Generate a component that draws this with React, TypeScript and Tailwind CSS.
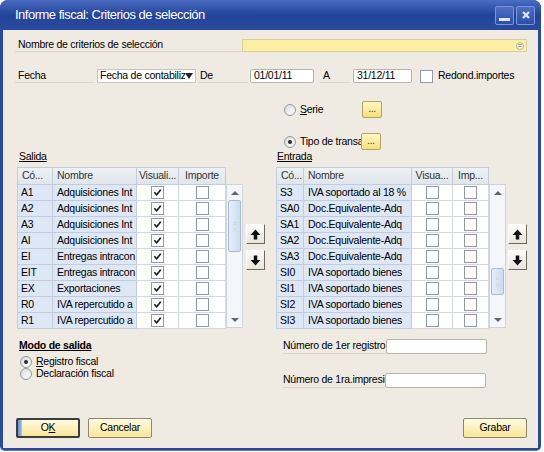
import React from "react";

type Row = { code: string; name: string; vis: boolean; imp: boolean };

const salida: Row[] = [
    { code: "A1", name: "Adquisiciones Int", vis: true, imp: false },
    { code: "A2", name: "Adquisiciones Int", vis: true, imp: false },
    { code: "A3", name: "Adquisiciones Int", vis: true, imp: false },
    { code: "AI", name: "Adquisiciones Int", vis: true, imp: false },
    { code: "EI", name: "Entregas intracon", vis: true, imp: false },
    { code: "EIT", name: "Entregas intracon", vis: true, imp: false },
    { code: "EX", name: "Exportaciones", vis: true, imp: false },
    { code: "R0", name: "IVA repercutido a", vis: true, imp: false },
    { code: "R1", name: "IVA repercutido a", vis: true, imp: false },
];

const entrada: Row[] = [
    { code: "S3", name: "IVA soportado al 18 %", vis: false, imp: false },
    { code: "SA0", name: "Doc.Equivalente-Adq", vis: false, imp: false },
    { code: "SA1", name: "Doc.Equivalente-Adq", vis: false, imp: false },
    { code: "SA2", name: "Doc.Equivalente-Adq", vis: false, imp: false },
    { code: "SA3", name: "Doc.Equivalente-Adq", vis: false, imp: false },
    { code: "SI0", name: "IVA soportado bienes", vis: false, imp: false },
    { code: "SI1", name: "IVA soportado bienes", vis: false, imp: false },
    { code: "SI2", name: "IVA soportado bienes", vis: false, imp: false },
    { code: "SI3", name: "IVA soportado bienes", vis: false, imp: false },
];

function Check({ checked }: { checked?: boolean }) {
    return (
        <span className="flex h-[13px] w-[13px] items-center justify-center border border-[#8e99ab] bg-white">
            {checked && (
                <svg viewBox="0 0 10 10" className="h-[9px] w-[9px]">
                    <path d="M1.5 4.8 L4 7.5 L8.6 2" stroke="#111" strokeWidth="1.7" fill="none" />
                </svg>
            )}
        </span>
    );
}

function Radio({ checked }: { checked?: boolean }) {
    return (
        <span className="flex h-[12px] w-[12px] shrink-0 items-center justify-center rounded-full border border-[#8f97a4] bg-gradient-to-br from-[#dcdcdc] to-white">
            {checked && <span className="h-[4px] w-[4px] rounded-full bg-[#2b2b2b]" />}
        </span>
    );
}

function Dots() {
    return (
        <button className="flex h-[17px] w-[20px] shrink-0 items-center justify-center rounded-[2px] border border-[#b3a462] bg-gradient-to-b from-[#fff6c4] to-[#f7df78] pb-[2px] text-[10px] leading-[10px] text-[#333]">
            ...
        </button>
    );
}

function Arrow({ up }: { up?: boolean }) {
    return (
        <button className="flex h-[20px] w-[19px] items-center justify-center border border-t-white border-l-white border-r-[#6f6a60] border-b-[#6f6a60] bg-gradient-to-b from-[#fdfcfa] to-[#e9e5dc]">
            <svg viewBox="0 0 10 10" className={"h-[11px] w-[11px] " + (up ? "" : "rotate-180")}>
                <path d="M5 0.5 L9.5 5.5 H6.6 V9.5 H3.4 V5.5 H0.5 Z" fill="#111" />
            </svg>
        </button>
    );
}

function ScrollBar({ gap, thumb }: { gap: number; thumb: number }) {
    return (
        <div className="mt-[17px] flex h-[144px] w-[17px] flex-col border border-[#cdd4de] bg-[#f4f6f9] px-[1px]">
            <div className="flex h-[15px] items-center justify-center">
                <span className="h-0 w-0 border-x-[4px] border-b-[4px] border-x-transparent border-b-[#5d6877]" />
            </div>
            <div style={{ height: gap }} />
            <div
                className="flex flex-col items-center justify-center gap-[1px] rounded-[2px] border border-[#a9bbd4] bg-gradient-to-r from-[#e6eef9] to-[#cddcf0]"
                style={{ height: thumb }}
            >
                <span className="text-[6px] leading-[5px] text-[#9aa9bf]">::</span>
                <span className="text-[6px] leading-[5px] text-[#9aa9bf]">::</span>
            </div>
            <div className="flex-1" />
            <div className="flex h-[15px] items-center justify-center">
                <span className="h-0 w-0 border-x-[4px] border-t-[4px] border-x-transparent border-t-[#5d6877]" />
            </div>
        </div>
    );
}

function Grid({
    rows,
    widths,
    heads,
}: {
    rows: Row[];
    widths: [number, number, number, number];
    heads: [string, string, string, string];
}) {
    const [w1, w2, w3, w4] = widths;
    return (
        <div className="flex flex-col border-l border-t border-[#c3ccd8]">
            <div className="flex h-[17px] bg-gradient-to-b from-[#eef1f5] to-[#dfe5ec] text-[#333]">
                {heads.map((h, i) => (
                    <div
                        key={h}
                        className={
                            "flex items-center overflow-hidden whitespace-nowrap border-b border-r border-[#c3ccd8] " +
                            (i < 2 ? "pl-[4px]" : "justify-center")
                        }
                        style={{ width: widths[i] }}
                    >
                        {h}
                    </div>
                ))}
            </div>
            {rows.map((r) => (
                <div key={r.code} className="flex h-[16px]">
                    <div
                        className="flex items-center overflow-hidden whitespace-nowrap border-b border-r border-[#c3ccd8] bg-[#dde7f5] pl-[3px]"
                        style={{ width: w1 }}
                    >
                        {r.code}
                    </div>
                    <div
                        className="flex items-center overflow-hidden whitespace-nowrap border-b border-r border-[#c3ccd8] bg-[#dde7f5] pl-[4px]"
                        style={{ width: w2 }}
                    >
                        {r.name}
                    </div>
                    <div
                        className="flex items-center justify-center border-b border-r border-[#d4d9e0] bg-white"
                        style={{ width: w3 }}
                    >
                        <Check checked={r.vis} />
                    </div>
                    <div
                        className="flex items-center justify-center border-b border-r border-[#d4d9e0] bg-white"
                        style={{ width: w4 }}
                    >
                        <Check checked={r.imp} />
                    </div>
                </div>
            ))}
        </div>
    );
}

function YellowButton({ children, main }: { children: React.ReactNode; main?: boolean }) {
    return (
        <button
            className={
                "relative flex h-[20px] w-[64px] items-center justify-center overflow-hidden rounded-[2px] bg-gradient-to-b from-[#fffbe3] to-[#f8e596] " +
                (main ? "border-2 border-[#3d3d3d]" : "border border-[#8d8670]")
            }
        >
            {main && <span className="absolute left-0 top-0 h-full w-[4px] bg-gradient-to-r from-[#5d8fd6] to-[#a9c4ea]" />}
            {children}
        </button>
    );
}

export default function App() {
    return (
        <div className="h-[452px] w-[544px] bg-white font-['Liberation_Sans',Arial,sans-serif] text-[10.5px] tracking-[-0.25px] text-black">
            <div className="flex h-[451px] w-[541px] flex-col overflow-hidden rounded-t-[8px] rounded-b-[5px] border-b border-[#6b7a99] bg-[#2b4a9b]">
                {/* title bar */}
                <div className="flex h-[30px] shrink-0 items-center bg-gradient-to-b from-[#4a6cc2] via-[#24449a] to-[#2a4a9f] pl-[15px] pr-[6px]">
                    <span className="text-[13px] tracking-[-0.5px] text-white">Informe fiscal: Criterios de selección</span>
                    <div className="ml-auto flex gap-[2px]">
                        <span className="flex h-[19px] w-[19px] items-end justify-center rounded-[2px] border border-[#7d97d6] bg-gradient-to-b from-[#4f6fc4] to-[#2c4ea6] pb-[3px]">
                            <span className="h-[3px] w-[11px] bg-[#dfe8ff]" />
                        </span>
                        <span className="flex h-[19px] w-[19px] items-center justify-center rounded-[2px] border border-[#7d97d6] bg-gradient-to-b from-[#4f6fc4] to-[#2c4ea6]">
                            <svg viewBox="0 0 10 10" className="h-[10px] w-[10px]">
                                <path d="M2 2 L8 8 M8 2 L2 8" stroke="#dfe8ff" strokeWidth="2.2" />
                            </svg>
                        </span>
                    </div>
                </div>

                {/* content */}
                <div className="mx-[3px] mb-[2px] flex flex-1 flex-col bg-[#efebe3] pl-[12px] pr-[11px]">
                    {/* Nombre de criterios */}
                    <div className="mt-[9px] flex h-[13px]">
                        <div className="flex w-[227px] items-center border-b border-[#dcd6ca] pl-[3px]">
                            Nombre de criterios de selección
                        </div>
                        <div className="flex flex-1 items-center justify-end border border-[#d9cf9c] bg-[#fcefa4] pr-[2px]">
                            <span className="flex h-[8px] w-[8px] flex-col items-center justify-center gap-[1px] rounded-full border border-[#b9b4a0] bg-[#f6f3e8]">
                                <span className="h-px w-[4px] bg-[#a19c8a]" />
                                <span className="h-px w-[4px] bg-[#a19c8a]" />
                            </span>
                        </div>
                    </div>

                    {/* Fecha */}
                    <div className="mt-[17px] flex h-[14px] items-stretch">
                        <div className="flex w-[80px] items-center border-b border-[#dcd6ca] pl-[3px]">Fecha</div>
                        <div className="ml-[2px] flex w-[99px] items-center border border-[#c9c5bc] bg-white pl-[2px]">
                            <span className="flex-1 overflow-hidden whitespace-nowrap">Fecha de contabiliz</span>
                            <span className="h-0 w-0 border-x-[4px] border-t-[6px] border-x-transparent border-t-[#222]" />
                            <span className="w-[2px]" />
                        </div>
                        <div className="ml-[2px] flex w-[50px] items-center border-b border-[#dcd6ca] pl-[2px]">De</div>
                        <div className="ml-[2px] flex w-[64px] items-center rounded-[2px] border border-[#b8b4ab] bg-white pl-[3px]">
                            01/01/11
                        </div>
                        <div className="ml-[6px] flex w-[31px] items-center border-b border-[#dcd6ca] pl-[3px]">A</div>
                        <div className="ml-[2px] flex w-[59px] items-center rounded-[2px] border border-[#b8b4ab] bg-white pl-[3px]">
                            31/12/11
                        </div>
                        <div className="ml-[8px] flex items-center">
                            <Check />
                        </div>
                        <div className="ml-[5px] flex items-center">Redond.importes</div>
                    </div>

                    {/* radios */}
                    <div className="ml-[269px] mt-[18px] flex flex-col gap-[15px]">
                        <div className="flex h-[17px] items-center">
                            <Radio />
                            <span className="ml-[2px] w-[64px] pl-[2px]">
                                <span className="underline">S</span>erie
                            </span>
                            <Dots />
                        </div>
                        <div className="flex h-[17px] items-center">
                            <Radio checked />
                            <span className="ml-[2px] w-[63px] overflow-hidden whitespace-nowrap pl-[2px]">
                                Tipo de transa
                            </span>
                            <Dots />
                        </div>
                    </div>

                    {/* tables */}
                    <div className="ml-[2px] flex">
                        <div className="flex w-[262px] flex-col">
                            <div className="h-[13px] pl-[2px] leading-[13px] underline">Salida</div>
                            <div className="mt-[4px] flex">
                                <Grid rows={salida} widths={[35, 84, 42, 47]} heads={["Có...", "Nombre", "Visuali...", "Importe"]} />
                                <ScrollBar gap={0} thumb={52} />
                                <div className="ml-[3px] mt-[57px] flex flex-col gap-[6px]">
                                    <Arrow up />
                                    <Arrow />
                                </div>
                            </div>
                        </div>
                        <div className="flex flex-col">
                            <div className="h-[13px] pl-[1px] leading-[13px] underline">Entrada</div>
                            <div className="mt-[4px] flex">
                                <Grid rows={entrada} widths={[27, 108, 41, 36]} heads={["Có...", "Nombre", "Visua...", "Imp..."]} />
                                <ScrollBar gap={68} thumb={27} />
                                <div className="ml-[2px] mt-[57px] flex flex-col gap-[6px]">
                                    <Arrow up />
                                    <Arrow />
                                </div>
                            </div>
                        </div>
                    </div>

                    {/* lower section */}
                    <div className="ml-[2px] mt-[10px] flex">
                        <div className="flex w-[266px] flex-col">
                            <div className="h-[13px] pl-[2px] font-bold leading-[13px] underline">Modo de salida</div>
                            <div className="mt-[4px] flex h-[12px] items-center pl-[3px]">
                                <Radio checked />
                                <span className="ml-[4px]">
                                    <span className="underline">R</span>egistro fiscal
                                </span>
                            </div>
                            <div className="flex h-[12px] items-center pl-[3px]">
                                <Radio />
                                <span className="ml-[4px]">Declaración fiscal</span>
                            </div>
                        </div>
                        <div className="flex flex-col">
                            <div className="flex h-[15px]">
                                <div className="flex w-[103px] items-center overflow-hidden whitespace-nowrap border-b border-[#dcd6ca]">
                                    Número de 1er registro
                                </div>
                                <div className="w-[101px] rounded-[2px] border border-[#b8b4ab] bg-white" />
                            </div>
                            <div className="mt-[19px] flex h-[15px]">
                                <div className="flex w-[102px] items-center overflow-hidden whitespace-nowrap border-b border-[#dcd6ca]">
                                    Número de 1ra.impresión
                                </div>
                                <div className="w-[101px] rounded-[2px] border border-[#b8b4ab] bg-white" />
                            </div>
                        </div>
                    </div>

                    {/* buttons */}
                    <div className="ml-[1px] mt-[30px] flex">
                        <YellowButton main>
                            O<span className="underline">K</span>
                        </YellowButton>
                        <div className="ml-[8px]">
                            <YellowButton>Cancelar</YellowButton>
                        </div>
                        <div className="ml-auto">
                            <YellowButton>Grabar</YellowButton>
                        </div>
                    </div>
                </div>
            </div>
        </div>
    );
}
